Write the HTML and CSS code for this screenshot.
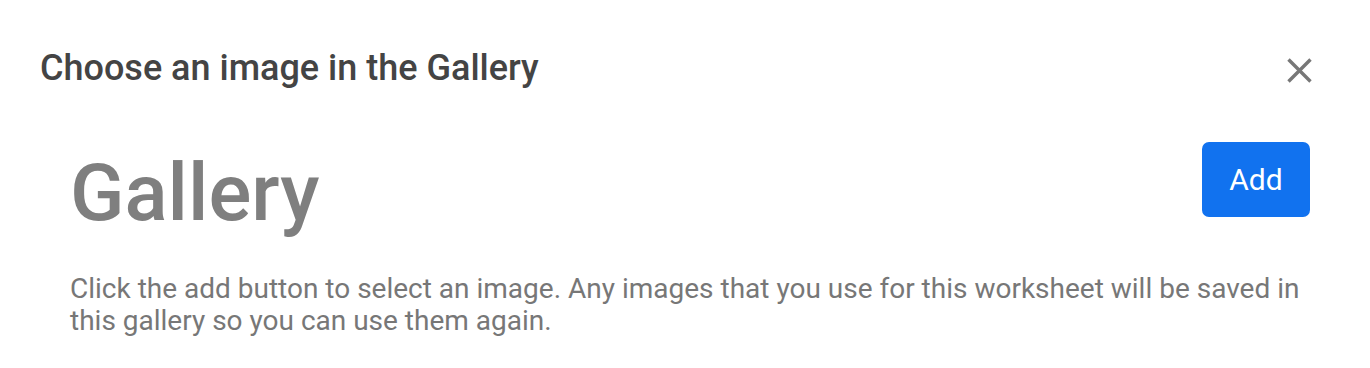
FILE: index.html
```html
<!DOCTYPE html>
<html lang="en">
<head>
<meta charset="utf-8">
<title>Choose an image in the Gallery</title>
<link rel="stylesheet" href="styles.css">
</head>
<body>
<div class="modal">
  <header class="modal-header">
    <h2 class="modal-title">Choose an image in the Gallery</h2>
    <button class="close" type="button" aria-label="Close">
      <svg viewBox="0 0 25 25" width="25" height="25"><path d="M1.5 1.5 L23.5 23.5 M23.5 1.5 L1.5 23.5" stroke="currentColor" stroke-width="3.4" fill="none"/></svg>
    </button>
  </header>
  <section class="modal-body">
    <div class="gallery-head">
      <h1 class="gallery-title">Gallery</h1>
      <button class="btn-add" type="button">Add</button>
    </div>
    <p class="gallery-desc">Click the add button to select an image. Any images that you use for this worksheet will be saved in this gallery so you can use them again.</p>
  </section>
</div>
</body>
</html>
```
FILE: styles.css
```css
html, body {
  margin: 0;
  padding: 0;
  background: #fff;
}
body {
  font-family: Roboto, "Liberation Sans", sans-serif;
}
.modal {
  width: 1370px;
  height: 368px;
  box-sizing: border-box;
}
.modal-header {
  display: flex;
  align-items: center;
  justify-content: space-between;
  height: 43px;
  padding: 47px 58px 0 40px;
}
.modal-title {
  margin: 0;
  font-size: 36px;
  line-height: 43px;
  font-weight: 500;
  color: #444;
}
.close {
  border: 0;
  background: none;
  padding: 0;
  margin-top: 4px;
  width: 25px;
  height: 25px;
  color: #777;
  display: flex;
  cursor: pointer;
}
.modal-body {
  padding: 52px 60px 0 70px;
}
.gallery-head {
  display: flex;
  align-items: flex-start;
  justify-content: space-between;
}
.gallery-title {
  margin: 3px 0 0;
  font-size: 80px;
  line-height: 96px;
  font-weight: 500;
  color: #7f7f7f;
}
.btn-add {
  width: 108px;
  height: 75px;
  border: 0;
  border-radius: 7px;
  background: #1172ef;
  color: #fff;
  font-family: Roboto, "Liberation Sans", sans-serif;
  font-size: 30px;
  padding: 0;
}
.gallery-desc {
  margin: 32px 0 0;
  font-size: 28px;
  line-height: 32px;
  color: #777;
}
```
